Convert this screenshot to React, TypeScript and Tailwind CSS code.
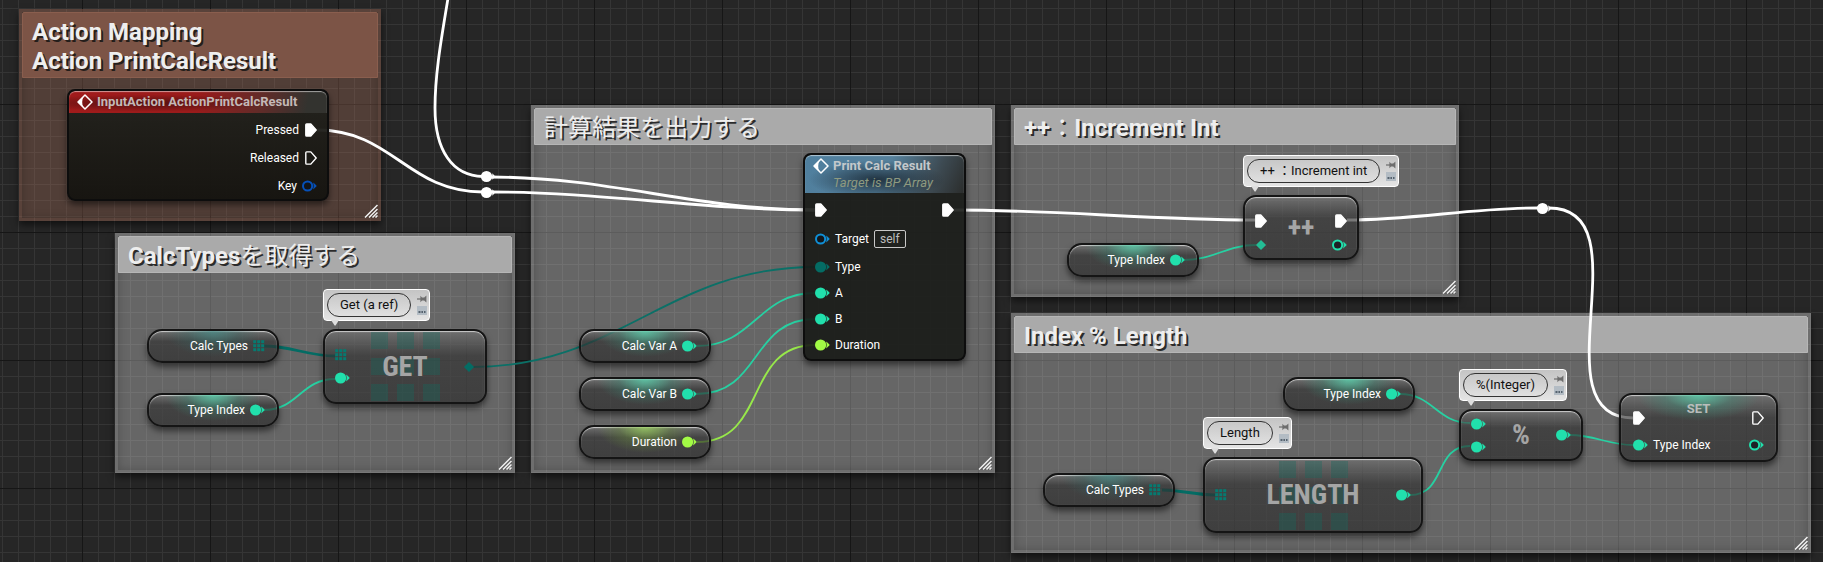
import type { ReactNode } from "react";

const TEAL = "#21e0ac";
const DEEP_TEAL = "#046c64";
const LIME = "#a2fb45";

/* ---------- pins ---------- */

function ExecPin({ filled = false }: { filled?: boolean }) {
  return (
    <svg width="12" height="14" viewBox="0 0 12 14" className="shrink-0" aria-hidden="true">
      <path
        d="M1.6 0.9H5.8L11.2 7L5.8 13.1H1.6Q0.8 13.1 0.8 12.3V1.7Q0.8 0.9 1.6 0.9Z"
        fill={filled ? "#ffffff" : "none"}
        stroke="#ffffff"
        strokeWidth="1.4"
        strokeLinejoin="round"
      />
    </svg>
  );
}

function DataPin({ color, hollow = false }: { color: string; hollow?: boolean }) {
  return (
    <svg width="15" height="12" viewBox="0 0 15 12" className="shrink-0" aria-hidden="true">
      {hollow ? (
        <circle cx="5.6" cy="6" r="4.6" fill="#10141a" fillOpacity="0.7" stroke={color} strokeWidth="2" />
      ) : (
        <circle cx="5.6" cy="6" r="5.6" fill={color} />
      )}
      <path d="M11.2 2.6Q13 4 14.8 6Q13 8 11.2 9.4Q12.2 6 11.2 2.6Z" fill={color} />
    </svg>
  );
}

function DiamondPin({ color }: { color: string }) {
  return (
    <svg width="12" height="12" viewBox="0 0 12 12" className="shrink-0" aria-hidden="true">
      <path d="M6 0.9L11.1 6L6 11.1L0.9 6Z" fill={color} />
    </svg>
  );
}

function ArrayPin() {
  const steps = [0, 4, 8];
  return (
    <svg width="12" height="12" viewBox="0 0 12 12" className="shrink-0" aria-hidden="true">
      {steps.map((y) =>
        steps.map((x) => <rect key={`${x}-${y}`} x={x + 0.2} y={y + 0.2} width="3" height="3" fill="#067a70" />),
      )}
    </svg>
  );
}

function EventIcon() {
  return (
    <svg width="16" height="16" viewBox="0 0 16 16" className="shrink-0" aria-hidden="true">
      <path d="M8 1L15 8L8 15L1 8Z" fill="none" stroke="#ffffff" strokeWidth="1.5" strokeLinejoin="round" />
      <path d="M1 8L6.6 2.4Q5 5.4 5.2 8Q5 10.6 6.6 13.6Z" fill="#ffffff" />
    </svg>
  );
}

/* ---------- comment boxes ---------- */

function Comment({ place, brown = false, children }: { place: string; brown?: boolean; children: ReactNode }) {
  return (
    <section
      className={`absolute border-[3px] shadow-[0_4px_7px_rgba(0,0,0,0.55),inset_0_0_8px_rgba(0,0,0,0.22)] ${
        brown ? "border-[#a46d59]/10 bg-[#a46d59]/35" : "border-white/5 bg-[#dfdfdf]/35"
      } ${place}`}
    >
      <h2
        className={`rounded-t-xs border px-[9px] pt-[5px] pb-[1px] text-[24px] leading-[29px] font-bold text-[#eeeeee] [text-shadow:2px_2px_0_rgba(20,20,20,0.85)] ${
          brown ? "border-[#8a5e4e] bg-[#7c5446]" : "border-[#b6b6b6] bg-[#aaaaaa]"
        }`}
      >
        {children}
      </h2>
      <svg width="14" height="14" viewBox="0 0 14 14" className="absolute right-0 bottom-0" aria-hidden="true">
        <path d="M1 13.5L13.5 1M5 13.5L13.5 5M8.5 13.5L13.5 8.5M11.5 13.5L13.5 11.5" stroke="#f2f2f2" strokeWidth="1.5" />
      </svg>
    </section>
  );
}

/* ---------- nodes ---------- */

const glass =
  "border-2 border-[#151515] bg-linear-to-b from-[#747474]/65 via-[#303030]/65 via-35% to-[#2a2a2a]/65 shadow-[0_4px_6px_rgba(0,0,0,0.5),inset_0_1px_1px_rgba(255,255,255,0.65)]";

function VariableNode({ place, label, kind }: { place: string; label: string; kind: "int" | "array" | "float" }) {
  const glow = {
    int: "bg-[radial-gradient(ellipse_50%_100%_at_50%_0%,rgba(90,205,170,0.85),rgba(60,150,125,0.35)_55%,transparent)]",
    array: "bg-[radial-gradient(ellipse_50%_100%_at_50%_0%,rgba(70,140,135,0.75),rgba(50,110,105,0.3)_55%,transparent)]",
    float: "bg-[radial-gradient(ellipse_50%_100%_at_50%_0%,rgba(155,210,95,0.8),rgba(110,150,60,0.35)_55%,transparent)]",
  }[kind];
  return (
    <article
      className={`absolute flex h-[34px] w-[132px] items-center justify-end gap-[5px] rounded-[15px] pr-[12px] text-[12px] text-white ${glass} ${place}`}
    >
      <span className={`absolute inset-x-4 top-0 h-[26px] ${glow}`} />
      <span className="relative">{label}</span>
      <span className="relative flex">
        {kind === "array" ? <ArrayPin /> : <DataPin color={kind === "float" ? LIME : TEAL} />}
      </span>
    </article>
  );
}

function CompactNode({
  place,
  title,
  grid = false,
  inputs,
  outputs,
}: {
  place: string;
  title: string;
  grid?: boolean;
  inputs: ReactNode;
  outputs: ReactNode;
}) {
  return (
    <article className={`absolute flex items-center justify-between rounded-[13px] px-[10px] ${glass} ${place}`}>
      {grid && (
        <span className="absolute inset-0 flex items-center justify-center">
          <span className="grid grid-cols-3 gap-[9px]">
            {Array.from({ length: 9 }, (_, i) => (
              <span key={i} className="size-[17px] bg-[#14695f]/35" />
            ))}
          </span>
        </span>
      )}
      <h3 className="absolute inset-0 flex items-center justify-center font-['Roboto_Condensed','Roboto',sans-serif] text-[28px] leading-none font-bold text-[#a5a5a5]">
        {title}
      </h3>
      <div className="relative flex flex-col items-start gap-[11px]">{inputs}</div>
      <div className="relative flex flex-col items-end gap-[11px]">{outputs}</div>
    </article>
  );
}

function Bubble({ place, text }: { place: string; text: string }) {
  return (
    <aside
      className={`absolute flex h-[32px] items-center gap-[6px] rounded-[4px] border border-white bg-linear-to-b from-[#c4c4c4] to-[#e4e4e4] pr-[2px] pl-[3px] ${place}`}
    >
      <p className="flex h-[24px] items-center rounded-full border border-[#333333] px-[12px] text-[13px] whitespace-nowrap text-[#111111]">
        {text}
      </p>
      <span className="flex flex-col gap-[3px]">
        <button type="button" aria-label="Pin comment bubble" className="block">
          <svg width="10" height="8" viewBox="0 0 10 8" className="block" aria-hidden="true">
            <path d="M0 4H4" stroke="#6d6d6d" strokeWidth="1.2" />
            <path d="M3.4 0.8L5 2.6H7.2L9.4 0.6V7.4L7.2 5.4H5L3.4 7.2Z" fill="#6d6d6d" />
          </svg>
        </button>
        <button type="button" aria-label="Show bubble when zoomed" className="block">
          <svg width="10" height="9" viewBox="0 0 10 9" className="block" aria-hidden="true">
            <rect width="10" height="9" fill="#b3bcc4" />
            <path d="M1.5 6H3.5M4.4 6H6M7 6H8.5" stroke="#55626e" strokeWidth="2" />
          </svg>
        </button>
      </span>
      <svg width="8" height="7" viewBox="0 0 8 7" className="absolute top-full left-[7px]" aria-hidden="true">
        <path d="M0 0H8L4.6 5.6H3.6Z" fill="#dedede" />
      </svg>
    </aside>
  );
}

function InputActionNode() {
  return (
    <article className="absolute top-[89px] left-[67px] h-[112px] w-[262px] overflow-hidden rounded-[8px] border-2 border-[#0d0d0d] bg-linear-to-b from-[#22221d]/95 to-[#14130f]/95 text-[12px] text-white shadow-[0_4px_6px_rgba(0,0,0,0.5)]">
      <header className="flex h-[22px] items-center gap-[4px] rounded-t-[6px] bg-[radial-gradient(ellipse_at_30%_55%,rgba(40,10,10,0.65),transparent_50%),linear-gradient(100deg,#a11b1b_0%,#991b1b_50%,#5f2c29_75%,#33332f_92%)] pl-[8px] shadow-[inset_0_1px_1px_rgba(255,255,255,0.55)]">
        <EventIcon />
        <h3 className="text-[13px] font-bold text-[#c4b9b7]">InputAction ActionPrintCalcResult</h3>
      </header>
      <ul className="flex flex-col pt-[3px] pr-[10px]">
        <li className="flex h-7 items-center justify-end gap-[6px]">
          Pressed <ExecPin filled />
        </li>
        <li className="flex h-7 items-center justify-end gap-[6px]">
          Released <ExecPin />
        </li>
        <li className="flex h-7 items-center justify-end gap-[5px]">
          Key <DataPin color="#0650b8" hollow />
        </li>
      </ul>
    </article>
  );
}

function PrintNode() {
  return (
    <article className="absolute top-[153px] left-[803px] h-[208px] w-[163px] overflow-hidden rounded-[8px] border-2 border-[#0d0d0d] bg-[#171916]/90 text-[12px] text-white shadow-[0_4px_6px_rgba(0,0,0,0.5)]">
      <header className="flex h-[38px] gap-[4px] rounded-t-[6px] bg-[radial-gradient(ellipse_at_45%_65%,rgba(15,25,35,0.75),transparent_55%),linear-gradient(115deg,#4f7f9e_0%,#56819c_50%,#3d4a52_80%,#2b2d2c_100%)] pt-[3px] pl-[8px] text-[13px] shadow-[inset_0_1px_1px_rgba(255,255,255,0.55)]">
        <EventIcon />
        <div>
          <h3 className="leading-4 font-bold text-[#c3c8cb]">Print Calc Result</h3>
          <p className="leading-[18px] text-[#8e9a80] italic">Target is BP Array</p>
        </div>
      </header>
      <ul className="flex flex-col px-[10px] pt-[2px]">
        <li className="flex h-[29px] items-center justify-between">
          <ExecPin filled />
          <ExecPin filled />
        </li>
        <li className="flex h-[30px] items-center gap-[5px]">
          <DataPin color="#0f8fd6" hollow />
          Target
          <span className="rounded-[2px] border border-[#c8c8c8] px-[5px] leading-4 text-[#bdbdbd]">self</span>
        </li>
        <li className="flex h-[26px] items-center gap-[5px]">
          <DataPin color={DEEP_TEAL} />
          Type
        </li>
        <li className="flex h-[26px] items-center gap-[5px]">
          <DataPin color={TEAL} />A
        </li>
        <li className="flex h-[26px] items-center gap-[5px]">
          <DataPin color={TEAL} />B
        </li>
        <li className="flex h-[26px] items-center gap-[5px]">
          <DataPin color={LIME} />
          Duration
        </li>
      </ul>
    </article>
  );
}

function SetNode() {
  return (
    <article className={`absolute top-[393px] left-[1619px] h-[69px] w-[159px] rounded-[13px] text-[12px] text-white ${glass}`}>
      <span className="absolute inset-x-4 top-0 h-[26px] bg-[radial-gradient(ellipse_50%_100%_at_50%_0%,rgba(90,205,170,0.85),rgba(60,150,125,0.35)_55%,transparent)]" />
      <h3 className="absolute inset-x-0 top-[6px] text-center text-[13px] leading-4 font-bold text-[#b9bdbb]">SET</h3>
      <div className="relative flex h-[46px] items-center justify-between px-[12px]">
        <ExecPin filled />
        <ExecPin />
      </div>
      <div className="relative -mt-1 flex items-center gap-[5px] px-[12px]">
        <DataPin color={TEAL} />
        <span className="grow leading-4">Type Index</span>
        <DataPin color={TEAL} hollow />
      </div>
    </article>
  );
}

/* ---------- wires ---------- */

type Wire = { from: [number, number]; to: [number, number]; color: string; width: number };

const wires: Wire[] = [
  { from: [317, 130], to: [483, 192], color: "#ffffff", width: 2.8 },
  { from: [491, 177], to: [815, 210], color: "#ffffff", width: 2.8 },
  { from: [491, 192], to: [815, 210], color: "#ffffff", width: 2.8 },
  { from: [954, 210], to: [1255, 220], color: "#ffffff", width: 2.8 },
  { from: [1347, 220], to: [1538, 208], color: "#ffffff", width: 2.8 },
  { from: [1549, 208], to: [1633, 418], color: "#ffffff", width: 2.8 },
  { from: [264, 346], to: [335, 356], color: DEEP_TEAL, width: 2.8 },
  { from: [1162, 490], to: [1215, 495], color: DEEP_TEAL, width: 2.8 },
  { from: [472, 367], to: [815, 267], color: "#0b7067", width: 1.8 },
  { from: [264, 410], to: [335, 379], color: "#27d0a2", width: 1.8 },
  { from: [697, 346], to: [815, 293], color: "#27d0a2", width: 1.8 },
  { from: [697, 394], to: [815, 319], color: "#27d0a2", width: 1.8 },
  { from: [697, 442], to: [815, 345], color: "#97e84a", width: 1.8 },
  { from: [1184, 260], to: [1256, 245], color: "#27d0a2", width: 1.8 },
  { from: [1400, 394], to: [1470, 423], color: "#27d0a2", width: 1.8 },
  { from: [1410, 495], to: [1470, 446], color: "#27d0a2", width: 1.8 },
  { from: [1570, 435], to: [1633, 445], color: "#27d0a2", width: 1.8 },
];

function wirePath({ from: [x1, y1], to: [x2, y2] }: Wire) {
  const pull = (Math.abs(x2 - x1) + Math.abs(y2 - y1)) / 3;
  return `M${x1} ${y1}C${x1 + pull} ${y1} ${x2 - pull} ${y2} ${x2} ${y2}`;
}

const knots: [number, number][] = [
  [486.5, 176.5],
  [486.5, 192.5],
  [1542.5, 208.5],
];

function Wires() {
  return (
    <svg width="1823" height="562" viewBox="0 0 1823 562" className="absolute top-0 left-0 overflow-visible" fill="none" aria-hidden="true">
      <path d="M449 -8C443 30 435 70 435 108C435 150 452 176 483 176.5" stroke="#ffffff" strokeWidth="2.8" />
      {wires.map((w, i) => (
        <path key={i} d={wirePath(w)} stroke={w.color} strokeWidth={w.width} />
      ))}
      {knots.map(([x, y]) => (
        <g key={`${x}-${y}`} fill="#ffffff">
          <circle cx={x} cy={y} r="5.6" />
          <path d={`M${x + 5.8} ${y - 3.2}L${x + 8.8} ${y}L${x + 5.8} ${y + 3.2}Z`} />
        </g>
      ))}
    </svg>
  );
}

const gridLines =
  "bg-[linear-gradient(to_right,#000_1px,transparent_1px),linear-gradient(to_bottom,#000_1px,transparent_1px),linear-gradient(to_right,#161616_1px,transparent_1px),linear-gradient(to_bottom,#161616_1px,transparent_1px),linear-gradient(to_right,#353535_1px,transparent_1px),linear-gradient(to_bottom,#353535_1px,transparent_1px)] bg-size-[4096px_4096px,4096px_4096px,128px_128px,128px_128px,16px_16px,16px_16px] bg-position-[466px_0,0_360px,82px_0,0_104px,2px_0,0_8px]";

export default function App() {
  return (
    <main
      className={`relative min-h-screen w-full overflow-hidden bg-[#262626] font-['Roboto','Noto_Sans_CJK_JP',sans-serif] text-[12px] ${gridLines}`}
    >
      <Comment brown place="top-[9px] left-[19px] h-[212px] w-[362px]">
        Action Mapping
        <br />
        Action PrintCalcResult
      </Comment>
      <Comment place="top-[233px] left-[115px] h-[240px] w-[400px]">
        CalcTypes<span className="font-normal">を取得する</span>
      </Comment>
      <Comment place="top-[105px] left-[531px] h-[368px] w-[464px]">
        <span className="font-normal">計算結果を出力する</span>
      </Comment>
      <Comment place="top-[105px] left-[1011px] h-[192px] w-[448px]">
        ++<span className="font-normal">：</span>Increment Int
      </Comment>
      <Comment place="top-[313px] left-[1011px] h-[240px] w-[800px]">Index % Length</Comment>

      <Wires />

      <InputActionNode />
      <PrintNode />
      <SetNode />

      <VariableNode place="top-[329px] left-[147px]" label="Calc Types" kind="array" />
      <VariableNode place="top-[393px] left-[147px]" label="Type Index" kind="int" />
      <VariableNode place="top-[329px] left-[579px]" label="Calc Var A" kind="int" />
      <VariableNode place="top-[377px] left-[579px]" label="Calc Var B" kind="int" />
      <VariableNode place="top-[425px] left-[579px]" label="Duration" kind="float" />
      <VariableNode place="top-[243px] left-[1067px]" label="Type Index" kind="int" />
      <VariableNode place="top-[377px] left-[1283px]" label="Type Index" kind="int" />
      <VariableNode place="top-[473px] left-[1043px]" label="Calc Types" kind="array" />

      <CompactNode
        place="top-[329px] left-[323px] h-[75px] w-[164px]"
        title="GET"
        grid
        inputs={
          <>
            <ArrayPin />
            <DataPin color={TEAL} />
          </>
        }
        outputs={<DiamondPin color={DEEP_TEAL} />}
      />
      <CompactNode
        place="top-[195px] left-[1243px] h-[65px] w-[116px] pt-[10px]"
        title="++"
        inputs={
          <>
            <ExecPin filled />
            <DiamondPin color="#23bd95" />
          </>
        }
        outputs={
          <>
            <ExecPin filled />
            <DataPin color={TEAL} hollow />
          </>
        }
      />
      <CompactNode
        place="top-[409px] left-[1459px] h-[52px] w-[124px]"
        title="%"
        inputs={
          <>
            <DataPin color={TEAL} />
            <DataPin color={TEAL} />
          </>
        }
        outputs={<DataPin color={TEAL} />}
      />
      <CompactNode
        place="top-[457px] left-[1203px] h-[76px] w-[220px]"
        title="LENGTH"
        grid
        inputs={<ArrayPin />}
        outputs={<DataPin color={TEAL} />}
      />

      <Bubble place="top-[289px] left-[323px]" text="Get (a ref)" />
      <Bubble place="top-[155px] left-[1243px]" text="++ ：Increment int" />
      <Bubble place="top-[369px] left-[1459px]" text="%(Integer)" />
      <Bubble place="top-[417px] left-[1203px]" text="Length" />
    </main>
  );
}
